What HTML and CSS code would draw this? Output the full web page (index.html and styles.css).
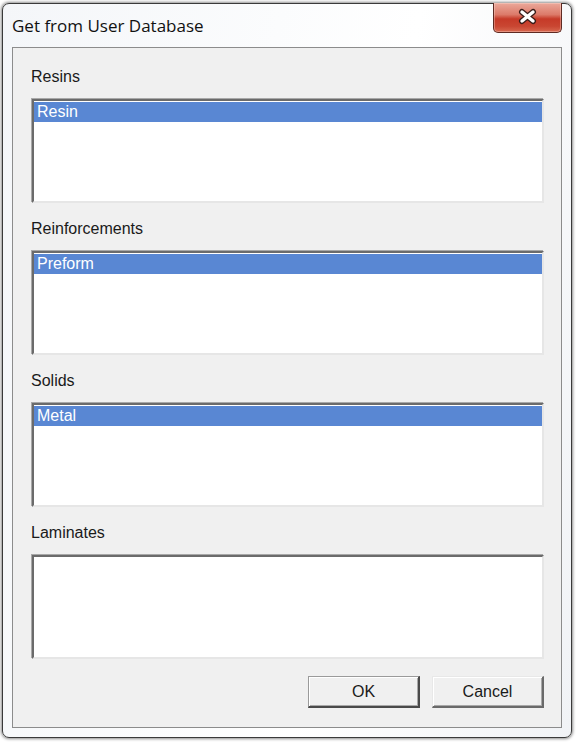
FILE: index.html
```html
<!DOCTYPE html>
<html>
<head>
<meta charset="utf-8">
<link rel="stylesheet" href="styles.css">
</head>
<body>
<div class="window">
  <div class="titlebar">
    <span class="title">Get from User Database</span>
    <div class="close">
      <svg width="67" height="28" viewBox="0 0 67 28">
        <path d="M28 9 L39 18 M39 9 L28 18" stroke="#3a1d1a" stroke-width="6" stroke-linecap="round" fill="none"/>
        <path d="M28 9 L39 18 M39 9 L28 18" stroke="#ffffff" stroke-width="3.4" stroke-linecap="round" fill="none"/>
      </svg>
    </div>
  </div>
  <div class="client">
    <div class="group">
      <div class="label">Resins</div>
      <div class="listbox"><div class="item sel">Resin</div></div>
    </div>
    <div class="group">
      <div class="label">Reinforcements</div>
      <div class="listbox"><div class="item sel">Preform</div></div>
    </div>
    <div class="group">
      <div class="label">Solids</div>
      <div class="listbox"><div class="item sel">Metal</div></div>
    </div>
    <div class="group last">
      <div class="label">Laminates</div>
      <div class="listbox"></div>
    </div>
    <div class="buttons">
      <button class="btn default">OK</button>
      <button class="btn">Cancel</button>
    </div>
  </div>
</div>
</body>
</html>
```

FILE: styles.css
```css
html, body {
  margin: 0;
  padding: 0;
  background: #ffffff;
}
body {
  width: 577px;
  height: 743px;
  overflow: hidden;
}
.window {
  box-sizing: border-box;
  margin: 3px 0 0 2px;
  width: 570px;
  height: 735px;
  border: 1px solid #3a3a3a;
  border-radius: 7px;
  box-shadow: 0 0 3px 1px rgba(0, 0, 0, 0.45);
  background: linear-gradient(100deg, #f4f6f9 0%, #fbfcfd 40%, #ffffff 60%, #f1f3f6 100%);
  padding: 0 9px 9px 9px;
  display: flex;
  flex-direction: column;
}
.titlebar {
  flex: 0 0 43px;
  height: 43px;
  display: flex;
  justify-content: space-between;
  align-items: flex-start;
}
.title {
  margin-top: 11px;
  font-family: "Open Sans", "Noto Sans", sans-serif;
  font-size: 17px;
  line-height: 22px;
  color: #111;
}
.close {
  box-sizing: border-box;
  width: 69px;
  height: 30px;
  margin-top: -1px;
  border: 1px solid #5e2a22;
  border-top: none;
  border-radius: 0 0 5px 5px;
  background: linear-gradient(180deg, #eba99b 0%, #dc7a69 40%, #c63a28 55%, #c94632 80%, #d8684f 100%);
  box-shadow: inset 0 0 0 1px rgba(255, 230, 220, 0.35);
}
.close svg {
  display: block;
}
.client {
  box-sizing: border-box;
  flex: 1 1 auto;
  min-height: 0;
  background: #f0f0f0;
  border: 1px solid #8c8c8c;
  padding: 19px 17px 19px 18px;
  display: flex;
  flex-direction: column;
  font-family: "Liberation Sans", Arial, sans-serif;
  font-size: 16px;
  color: #1a1a1a;
}
.group {
  display: flex;
  flex-direction: column;
  margin-bottom: 16px;
}
.group.last {
  margin-bottom: 0;
}
.label {
  height: 20px;
  line-height: 20px;
  margin-bottom: 12px;
}
.listbox {
  box-sizing: border-box;
  height: 104px;
  background: #ffffff;
  border-style: solid;
  border-width: 2px;
  border-color: #6b6b6b #e6e6e6 #e6e6e6 #6b6b6b;
  box-shadow: -1px -1px 0 #a8a8a8;
  margin-left: 1px;
  padding-top: 1px;
}
.item {
  height: 20px;
  line-height: 20px;
  padding-left: 3px;
}
.item.sel {
  background: #5987d3;
  color: #ffffff;
}
.buttons {
  margin-top: auto;
  display: flex;
  justify-content: flex-end;
  gap: 12px;
}
.btn {
  box-sizing: border-box;
  width: 112px;
  height: 32px;
  margin: 0;
  padding: 0;
  font-family: "Liberation Sans", Arial, sans-serif;
  font-size: 16px;
  color: #1a1a1a;
  background: #f0f0f0;
  border-style: solid;
  border-width: 1px 2px 2px 1px;
  border-color: #e8e8e8 #6a6a6a #6a6a6a #e8e8e8;
  box-shadow: inset 1px 1px 0 #ffffff, inset -1px -1px 0 #a8a8a8;
}
.btn.default {
  border-color: #9a9a9a #4a4a4a #4a4a4a #9a9a9a;
}
```
